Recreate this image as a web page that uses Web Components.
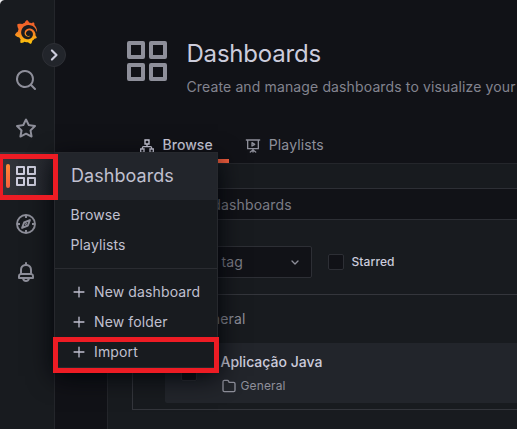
<!DOCTYPE html>
<html lang="en">
<head>
<meta charset="utf-8">
<title>Dashboards</title>
<style>
html,body{margin:0;height:100%;overflow:hidden;background:#111217}
body{font-family:Inter,"Liberation Sans",sans-serif;font-size:14px;line-height:22px;letter-spacing:.13px;color:#ccccdc}
</style>
</head>
<body>
<dash-app></dash-app>
<script>
const UNI = {
  apps:'<path d="M10,13H3a1,1,0,0,0-1,1v7a1,1,0,0,0,1,1h7a1,1,0,0,0,1-1V14A1,1,0,0,0,10,13ZM9,20H4V15H9ZM21,2H14a1,1,0,0,0-1,1v7a1,1,0,0,0,1,1h7a1,1,0,0,0,1-1V3A1,1,0,0,0,21,2ZM20,9H15V4h5Zm1,4H14a1,1,0,0,0-1,1v7a1,1,0,0,0,1,1h7a1,1,0,0,0,1-1V14A1,1,0,0,0,21,13Zm-1,7H15V15h5ZM10,2H3A1,1,0,0,0,2,3v7a1,1,0,0,0,1,1h7a1,1,0,0,0,1-1V3A1,1,0,0,0,10,2ZM9,9H4V4H9Z"/>',
  search:'<path d="M21.71,20.29,18,16.61A9,9,0,1,0,16.61,18l3.68,3.68a1,1,0,0,0,1.42,0A1,1,0,0,0,21.71,20.29ZM11,18a7,7,0,1,1,7-7A7,7,0,0,1,11,18Z"/>',
  star:'<path d="M22,9.67A1,1,0,0,0,21.14,9l-5.69-.83L12.9,3a1,1,0,0,0-1.8,0L8.55,8.16,2.86,9a1,1,0,0,0-.81.68,1,1,0,0,0,.25,1l4.13,4-1,5.68A1,1,0,0,0,6.9,21.44L12,18.77l5.1,2.67a.93.93,0,0,0,.46.12,1,1,0,0,0,.59-.19,1,1,0,0,0,.4-1l-1-5.68,4.13-4A1,1,0,0,0,22,9.67Zm-6.15,4a1,1,0,0,0-.29.88l.72,4.2-3.76-2a1.06,1.06,0,0,0-.94,0l-3.76,2,.72-4.2a1,1,0,0,0-.29-.88l-3-3,4.21-.61a1,1,0,0,0,.76-.55L12,5.7l1.88,3.82a1,1,0,0,0,.76.55l4.21.61Z"/>',
  bell:'<path d="M18,13.18V10a6,6,0,0,0-5-5.91V3a1,1,0,0,0-2,0V4.09A6,6,0,0,0,6,10v3.18A3,3,0,0,0,4,16v2a1,1,0,0,0,1,1H8.14a4,4,0,0,0,7.72,0H19a1,1,0,0,0,1-1V16A3,3,0,0,0,18,13.18ZM8,10a4,4,0,0,1,8,0v3H8Zm4,10a2,2,0,0,1-1.72-1h3.44A2,2,0,0,1,12,20Zm6-3H6V16a1,1,0,0,1,1-1H17a1,1,0,0,1,1,1Z"/>',
  compass:'<g fill="none" stroke="currentColor" stroke-width="1.9" stroke-linejoin="round"><circle cx="12" cy="12" r="9"/><path d="M12 3v3M12 18v3M3 12h3M18 12h3M15.9 8.1l-2 5.4-5.8 2.4 2-5.4z"/><path d="M11.2 12.8l1.6-1.6" stroke-width="1.4"/></g>',
  sitemap:'<g fill="none" stroke="currentColor" stroke-width="2"><path d="M9 3h6v6H9zM2.5 16.5h5v5h-5zM16.5 16.5h5v5h-5zM12 9v4M5 16.5V15a2 2 0 0 1 2-2h10a2 2 0 0 1 2 2v1.5"/></g>',
  present:'<g fill="none" stroke="currentColor" stroke-width="2" stroke-linecap="round" stroke-linejoin="round"><path d="M2 3h20M4 3v13h16V3M12 16v5M12 18l-4 3M12 18l4 3"/><path d="M10.5 7v5l4-2.5z"/></g>',
  folder:'<path d="M19,5.5H12.72l-.32-1a3,3,0,0,0-2.84-2H5a3,3,0,0,0-3,3v13a3,3,0,0,0,3,3H19a3,3,0,0,0,3-3V8.5A3,3,0,0,0,19,5.5Zm1,13a1,1,0,0,1-1,1H5a1,1,0,0,1-1-1V5.5a1,1,0,0,1,1-1H9.56a1,1,0,0,1,.95.68l.54,1.64A1,1,0,0,0,12,7.5h7a1,1,0,0,1,1,1Z"/>',
  down:'<path fill="none" stroke="currentColor" stroke-width="2" stroke-linecap="round" stroke-linejoin="round" d="M7.500 10.500l4.500 4.500 4.500-4.500"/>',
  right:'<path fill="none" stroke="currentColor" stroke-width="2.6" stroke-linecap="round" stroke-linejoin="round" d="M9.5 6.5l5.5 5.5-5.5 5.5"/>',
  plus:'<path fill="none" stroke="currentColor" stroke-width="2.2" stroke-linecap="round" d="M12 3.500v17M3.500 12h17"/>',
  logo:'<defs><linearGradient id="g" x1="0" y1="0" x2="0" y2="1"><stop offset="0" stop-color="#f05a28"/><stop offset=".4" stop-color="#f4702a"/><stop offset="1" stop-color="#fcca0a"/></linearGradient></defs><path fill="url(#g)" d="M23.02 10.59a8.578 8.578 0 0 0-.862-3.034 8.911 8.911 0 0 0-1.789-2.445c.337-1.342-.413-2.505-.413-2.505-1.292-.08-2.113.4-2.416.62-.052-.02-.102-.044-.154-.064-.22-.089-.446-.172-.677-.247-.231-.073-.47-.14-.711-.197a9.867 9.867 0 0 0-.875-.161C14.557.753 12.94 0 12.94 0c-1.804 1.145-2.147 2.744-2.147 2.744l-.018.093c-.098.029-.2.057-.298.088-.138.042-.275.094-.413.143-.138.055-.275.107-.41.166a8.869 8.869 0 0 0-1.557.87l-.063-.029c-2.497-.955-4.716.195-4.716.195-.203 2.658.996 4.33 1.235 4.636a11.608 11.608 0 0 0-.607 2.635C1.636 12.677.953 15.014.953 15.014c1.926 2.214 4.171 2.351 4.171 2.351.003-.002.006-.002.006-.005.285.509.615.994.986 1.446.156.19.32.371.488.548-.704 2.009.099 3.68.099 3.68 2.144.08 3.553-.937 3.849-1.173a9.784 9.784 0 0 0 3.164.501h.08l.055-.003.107-.002.103-.005.003.002c1.01 1.44 2.788 1.646 2.788 1.646 1.264-1.332 1.337-2.653 1.337-2.94v-.058c0-.02-.003-.039-.003-.06.265-.187.52-.387.758-.6a7.875 7.875 0 0 0 1.415-1.7c1.43.083 2.437-.885 2.437-.885-.236-1.49-1.085-2.216-1.264-2.354l-.018-.013-.016-.013a.217.217 0 0 1-.031-.02c.008-.092.016-.18.02-.27.011-.162.016-.323.016-.48v-.253l-.005-.098-.008-.135a1.891 1.891 0 0 0-.01-.13c-.003-.042-.008-.083-.013-.125l-.016-.124-.018-.122a6.215 6.215 0 0 0-2.032-3.73 6.015 6.015 0 0 0-3.222-1.46 6.292 6.292 0 0 0-.85-.048l-.107.002h-.063l-.044.003-.104.008a4.777 4.777 0 0 0-3.335 1.695c-.332.4-.592.84-.768 1.297a4.594 4.594 0 0 0-.312 1.817l.003.091c.005.055.007.11.013.164a3.615 3.615 0 0 0 .698 1.82 3.53 3.53 0 0 0 1.827 1.282c.33.098.66.14.971.137.039 0 .078 0 .114-.002l.063-.003c.02 0 .041-.003.062-.003.034-.002.065-.007.099-.01.007 0 .018-.003.028-.003l.031-.005.06-.008a1.18 1.18 0 0 0 .112-.02c.036-.008.072-.013.109-.024a2.634 2.634 0 0 0 .914-.415c.028-.02.056-.041.085-.065a.248.248 0 0 0 .039-.35.244.244 0 0 0-.309-.06l-.078.042c-.09.044-.184.083-.283.116a2.476 2.476 0 0 1-.475.096c-.028.003-.054.006-.083.006l-.083.002c-.026 0-.054 0-.08-.002l-.102-.006h-.012l-.024.006c-.016-.003-.031-.003-.044-.006-.031-.002-.06-.007-.091-.01a2.59 2.59 0 0 1-.724-.213 2.557 2.557 0 0 1-.667-.438 2.52 2.52 0 0 1-.805-1.475 2.306 2.306 0 0 1-.029-.444l.006-.122v-.023l.002-.031c.003-.021.003-.04.005-.06a3.163 3.163 0 0 1 1.352-2.29 3.12 3.12 0 0 1 .937-.43 2.946 2.946 0 0 1 .776-.101h.06l.07.002.045.003h.026l.07.005a4.041 4.041 0 0 1 1.635.49 3.94 3.94 0 0 1 1.602 1.662 3.77 3.77 0 0 1 .397 1.414l.005.076.003.075c.002.026.002.05.002.075 0 .024.003.052 0 .07v.065l-.002.073-.008.174a6.195 6.195 0 0 1-.08.639 5.1 5.1 0 0 1-.267.927 5.31 5.31 0 0 1-.624 1.13 5.052 5.052 0 0 1-3.237 2.014 4.82 4.82 0 0 1-.649.066l-.039.003h-.287a6.607 6.607 0 0 1-1.716-.265 6.776 6.776 0 0 1-3.4-2.274 6.75 6.75 0 0 1-.746-1.15 6.616 6.616 0 0 1-.714-2.596l-.005-.083-.002-.02v-.056l-.003-.073v-.096l-.003-.104v-.07l.003-.163c.008-.22.026-.45.054-.678a8.707 8.707 0 0 1 .28-1.355c.128-.444.286-.872.473-1.277a7.04 7.04 0 0 1 1.456-2.1 5.925 5.925 0 0 1 .953-.763c.169-.111.343-.213.524-.306.089-.05.182-.091.273-.135.047-.02.093-.042.138-.062a7.177 7.177 0 0 1 .714-.267l.145-.045c.049-.015.098-.026.148-.041.098-.029.197-.052.296-.076.049-.013.1-.02.15-.033l.15-.032.151-.028.076-.013.075-.01.153-.024c.057-.01.114-.013.171-.023l.169-.021c.036-.003.073-.008.106-.01l.073-.008.036-.003.042-.002c.057-.003.114-.008.171-.01l.086-.006h.023l.037-.003.145-.007a7.999 7.999 0 0 1 1.708.125 7.917 7.917 0 0 1 2.048.68 8.253 8.253 0 0 1 1.672 1.09l.09.077.089.078c.06.052.114.107.171.159.057.052.112.106.166.16.052.055.107.107.159.164a8.671 8.671 0 0 1 1.41 1.978c.012.026.028.052.04.078l.04.078.075.156c.023.051.05.1.07.153l.065.15a8.848 8.848 0 0 1 .45 1.34.19.19 0 0 0 .201.142.186.186 0 0 0 .172-.184c.01-.246.002-.532-.024-.856z"/>'
};

function define(name, css, html) {
  customElements.define(name, class extends HTMLElement {
    constructor() {
      super();
      this.attachShadow({mode: 'open'}).innerHTML =
        '<style>*{box-sizing:border-box}' + css + '</style>' + (typeof html === 'function' ? html(this) : html);
    }
  });
}

customElements.define('ui-icon', class extends HTMLElement {
  constructor() { super(); this.attachShadow({mode: 'open'}); }
  connectedCallback() {
    const s = this.getAttribute('size') || 24;
    this.shadowRoot.innerHTML = `<style>:host{display:block;flex:none;width:${s}px;height:${s}px}svg{display:block;overflow:visible}</style>
      <svg width="${s}" height="${s}" viewBox="0 0 24 24" fill="currentColor">${UNI[this.getAttribute('name')]}</svg>`;
  }
});

define('nav-item', `
  :host{display:flex;align-items:center;height:48px;padding-left:14px;color:#8e8f9a;box-sizing:border-box}
  :host([active]){color:#ccccdc;background:linear-gradient(90deg,#33363c,#24272d);padding-left:6px}
  i{display:none;width:4px;height:24px;border-radius:2px;background:linear-gradient(#ff8833,#f55f3e);margin-right:4px}
  :host([active]) i{display:block}`, '<i></i><slot></slot>');

define('side-nav', `
  :host{display:block;width:55px;flex:none;background:#181b1f;border-right:1px solid #24262b;padding-top:8px;box-sizing:border-box;height:429px}`,
  `<nav-item><ui-icon name="logo"></ui-icon></nav-item>
   <nav-item><ui-icon name="search"></ui-icon></nav-item>
   <nav-item><ui-icon name="star"></ui-icon></nav-item>
   <nav-item active><ui-icon name="apps"></ui-icon></nav-item>
   <nav-item><ui-icon name="compass"></ui-icon></nav-item>
   <nav-item><ui-icon name="bell"></ui-icon></nav-item>`);

define('page-header', `
  :host{display:flex;gap:15.5px;padding:37px 0 0 16px;height:126px;color:#8e8f9a;white-space:nowrap;box-sizing:border-box}
  h1{margin:0;font-size:24px;font-weight:400;line-height:28px;letter-spacing:-.2px;color:#ccccdc;padding-top:3px}
  p{margin:8px 0 0;line-height:22px;color:#83848f}`,
  `<ui-icon name="apps" size="48"></ui-icon><div><h1>Dashboards</h1><p>Create and manage dashboards to visualize your</p></div>`);

define('page-tab', `
  :host{display:flex;align-items:flex-start;gap:8px;height:37px;padding:8px 16px 0;color:#8e8f9a;box-sizing:border-box;border-bottom:4px solid transparent}
  ui-icon{margin-top:4px}
  :host([active]){color:#ccccdc;font-weight:500;letter-spacing:.05px;border-image:linear-gradient(90deg,#f55f3e,#f55f3e) 4}`,
  e => `<ui-icon name="${e.getAttribute('icon')}" size="16"></ui-icon><slot></slot>`);

define('tab-bar', `:host{display:flex;padding-left:15.5px;height:37px}`,
  `<page-tab active icon="sitemap">Browse</page-tab><page-tab icon="present">Playlists</page-tab>`);

define('check-box', `
  :host{display:flex;align-items:center;gap:7.5px;font-size:12px;font-weight:500;letter-spacing:.1px}
  i{width:16px;height:16px;background:#111217;border:1px solid #2d2f35;border-radius:2px}`, '<i></i><slot></slot>');

define('search-field', `
  :host{display:block;height:32px;margin-right:-8px;border:1px solid #2d2f35;background:#111217;color:#7b7c86;line-height:31px;padding-left:28px;box-sizing:border-box}`,
  '<slot></slot>');

define('tag-select', `
  :host{display:flex;align-items:center;justify-content:space-between;width:180px;height:32px;border:1px solid #2d2f35;border-radius:2px;background:#111217;color:#7b7c86;padding:0 8px 0 30px;box-sizing:border-box}
  ui-icon{color:#8e8f9a}`, '<slot></slot><ui-icon name="down" size="16"></ui-icon>');

define('dashboard-row', `
  :host{display:flex;height:60px;margin:0 -8px 0 32px;padding:8px 16px;gap:23.5px;background:#22252b;border-radius:2px;box-sizing:border-box}
  check-box{align-self:center}
  div{white-space:nowrap}
  b{display:block;font-weight:500;line-height:22px;letter-spacing:0}
  small{display:flex;align-items:center;gap:4px;font-size:12px;line-height:20px;color:#8e8f9a;padding-top:3px}`,
  `<check-box></check-box><div><b><slot></slot></b><small><ui-icon name="folder" size="16"></ui-icon><slot name="folder"></slot></small></div>`);

define('folder-section', `
  :host{display:block;height:116px;margin-top:16px;border:1px solid #34363c;border-right:0;box-sizing:border-box;color:#8e8f9a}
  header{height:48px;line-height:48px;padding-left:60px}
  dashboard-row{color:#ccccdc}`,
  `<header>General</header><dashboard-row>Aplicação Java<span slot="folder">General</span></dashboard-row>`);

define('browse-panel', `
  :host{display:block;height:266px;border:1px solid #24262b;border-right:0;border-bottom:0;background:#181b1f;padding:24px 0 0 24px;box-sizing:border-box}
  .filters{display:flex;gap:16px;margin-top:26px}`,
  `<search-field>Search dashboards</search-field>
   <div class="filters"><tag-select>Filter by tag</tag-select><check-box>Starred</check-box></div>
   <folder-section></folder-section>`);

define('menu-item', `
  :host{display:flex;align-items:center;height:30px;padding-left:15.5px;gap:8px;box-sizing:border-box}
  :host([action]){padding-left:17px}`,
  e => (e.hasAttribute('action') ? '<ui-icon name="plus" size="14"></ui-icon>' : '') + '<slot></slot>');

define('nav-menu', `
  :host{position:absolute;left:54px;top:152px;width:164px;height:216px;background:#181b1f;border:1px solid #26282d;box-shadow:0 8px 24px #010409;box-sizing:border-box;white-space:nowrap;color:#c0c0d0}
  h2{margin:0;height:47px;padding-left:16px;font-size:18px;font-weight:400;letter-spacing:.05px;line-height:46px;background:#22252b}
  hr{border:0;height:1px;margin:8px 0;background:#2a2c31}`,
  `<h2>Dashboards</h2><menu-item>Browse</menu-item><menu-item>Playlists</menu-item><hr>
   <div><menu-item action>New dashboard</menu-item><menu-item action>New folder</menu-item><menu-item action>Import</menu-item></div>`);

define('nav-toggle', `
  :host{position:absolute;left:42px;top:43px;width:24px;height:24px;border-radius:50%;background:#22252b;border:1px solid #2d2f35;color:#ccccdc;display:flex;align-items:center;justify-content:center;box-sizing:border-box}`,
  '<ui-icon name="right" size="20"></ui-icon>');

define('mark-box', `
  :host{position:absolute;border:5px solid #ed1c24;box-sizing:border-box}
  :host([kind=nav]){left:0;top:154px;width:58px;height:46px;border-left-width:3px}
  :host([kind=item]){left:53px;top:337px;width:166px;height:36px}`, '');

define('window-corner', `
  :host{position:absolute;left:0;top:0;width:5px;height:5px;background:radial-gradient(circle at 100% 100%,transparent 4.5px,#e8e8ea 5.5px)}`, '');

define('dash-app', `
  :host{display:flex;position:relative;width:517px;height:429px;overflow:hidden}
  main{flex:1;min-width:0;padding-left:52px}`,
  `<side-nav></side-nav>
   <main><page-header></page-header><tab-bar></tab-bar><browse-panel></browse-panel></main>
   <nav-menu></nav-menu><nav-toggle></nav-toggle>
   <mark-box kind="nav"></mark-box><mark-box kind="item"></mark-box><window-corner></window-corner>`);
</script>
</body>
</html>
